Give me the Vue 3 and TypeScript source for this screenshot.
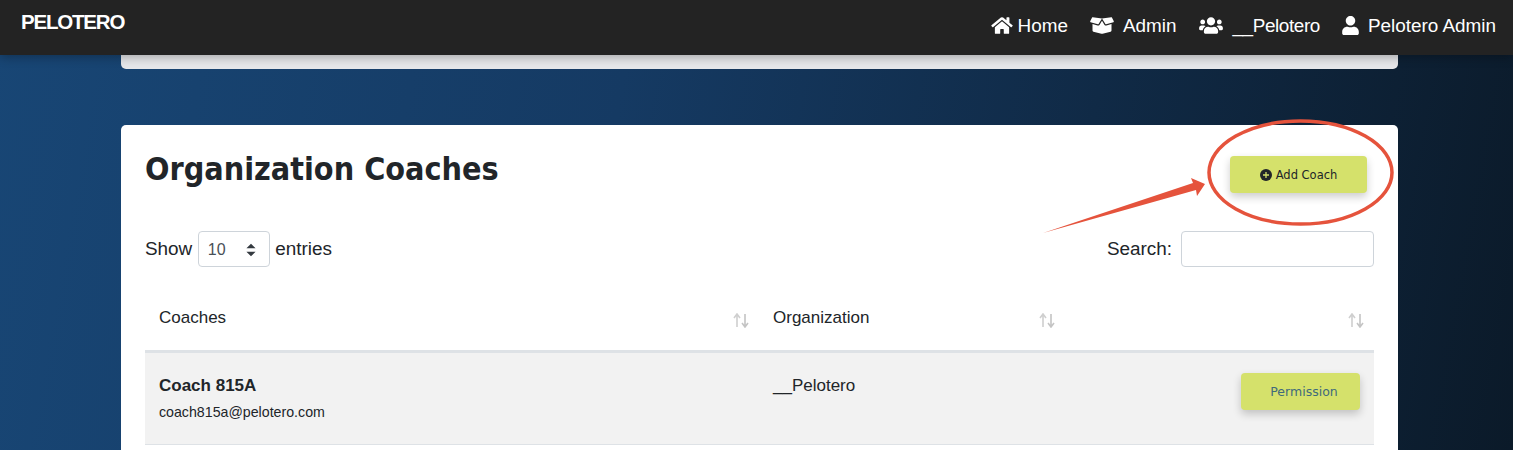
<script setup lang="ts">
type NavLink = { label: string; viewBox: string; d: string; width: number; gap: number }

const navLinks: NavLink[] = [
  {
    label: 'Home',
    viewBox: '0 0 576 512',
    width: 22,
    gap: 5,
    d: 'M280.37 148.26L96 300.11V464a16 16 0 0 0 16 16l112.06-.29a16 16 0 0 0 15.92-16V368a16 16 0 0 1 16-16h64a16 16 0 0 1 16 16v95.64a16 16 0 0 0 16 16.05L464 480a16 16 0 0 0 16-16V300L295.67 148.26a12.19 12.19 0 0 0-15.3 0zM571.6 251.47L488 182.56V44.05a12 12 0 0 0-12-12h-56a12 12 0 0 0-12 12v72.61L318.47 43a48 48 0 0 0-61 0L4.34 251.47a12 12 0 0 0-1.6 16.9l25.5 31A12 12 0 0 0 45.15 301l235.22-193.74a12.19 12.19 0 0 1 15.3 0L530.9 301a12 12 0 0 0 16.9-1.6l25.5-31a12 12 0 0 0-1.7-16.93z',
  },
  {
    label: 'Admin',
    viewBox: '0 0 640 512',
    width: 24,
    gap: 9,
    d: 'M425.7 256c-16.9 0-32.8-9-41.4-23.4L320 126l-64.2 106.6c-8.7 14.5-24.6 23.5-41.5 23.5-4.5 0-9-.6-13.3-1.9L64 215v178c0 14.7 10 27.5 24.2 31l216.2 54.1c10.2 2.5 20.9 2.5 31 0L551.8 424c14.2-3.6 24.2-16.4 24.2-31V215l-137 39.1c-4.3 1.3-8.8 1.9-13.3 1.9zm212.6-112.2L586.8 41c-3.1-6.2-9.8-9.8-16.7-8.9L320 64l91.7 152.1c3.8 6.3 11.4 9.3 18.5 7.3l197.9-56.5c9.9-2.9 14.7-13.9 10.2-23.1zM53.2 41L1.7 143.8c-4.6 9.2.3 20.2 10.1 23l197.9 56.5c7.1 2 14.7-1 18.5-7.3L320 64 69.8 32.1c-6.9-.8-13.5 2.7-16.6 8.9z',
  },
  {
    label: '__Pelotero',
    viewBox: '0 0 640 512',
    width: 24,
    gap: 10,
    d: 'M96 224c35.3 0 64-28.7 64-64s-28.7-64-64-64-64 28.7-64 64 28.7 64 64 64zm448 0c35.3 0 64-28.7 64-64s-28.7-64-64-64-64 28.7-64 64 28.7 64 64 64zm32 32h-64c-17.6 0-33.5 7.1-45.1 18.6 40.3 22.1 68.9 62 75.1 109.4h66c17.7 0 32-14.3 32-32v-32c0-35.3-28.7-64-64-64zm-256 0c61.9 0 112-50.1 112-112S381.9 32 320 32 208 82.1 208 144s50.1 112 112 112zm76.8 32h-8.3c-20.8 10-43.9 16-68.5 16s-47.6-6-68.5-16h-8.3C179.6 288 128 339.6 128 403.2V432c0 26.5 21.5 48 48 48h288c26.5 0 48-21.5 48-48v-28.8c0-63.6-51.6-115.2-115.2-115.2zm-223.7-13.4C161.5 263.1 145.6 256 128 256H64c-35.3 0-64 28.7-64 64v32c0 17.7 14.3 32 32 32h65.9c6.3-47.4 34.9-87.3 75.2-109.4z',
  },
  {
    label: 'Pelotero Admin',
    viewBox: '0 0 448 512',
    width: 17,
    gap: 9,
    d: 'M224 256c70.7 0 128-57.3 128-128S294.7 0 224 0 96 57.3 96 128s57.3 128 128 128zm89.6 32h-16.7c-22.2 10.2-46.9 16-72.9 16s-50.6-5.8-72.9-16h-16.7C60.2 288 0 348.2 0 422.4V464c0 26.5 21.5 48 48 48h352c26.5 0 48-21.5 48-48v-41.6c0-74.2-60.2-134.4-134.4-134.4z',
  },
]

const columns = ['Coaches', 'Organization', '']
</script>

<template>
  <div class="page">
    <nav class="navbar">
      <span class="brand">PELOTERO</span>
      <ul class="nav-links">
        <li
          v-for="link in navLinks"
          :key="link.label"
          class="nav-link"
          :class="{ tight: link.label.startsWith('__') }"
          :style="{ gap: link.gap + 'px' }"
        >
          <svg :viewBox="link.viewBox" :width="link.width" height="19" fill="#fff">
            <path :d="link.d" />
          </svg>
          {{ link.label }}
        </li>
      </ul>
    </nav>

    <main class="content">
      <div class="card card-top"></div>

      <section class="card card-coaches">
        <header class="card-head">
          <h1 class="title">Organization Coaches</h1>
          <button class="btn btn-add">
            <svg viewBox="0 0 12 12" width="12" height="12">
              <circle cx="6" cy="6" r="6" fill="#212529" />
              <path d="M6 3v6M3 6h6" stroke="#d5e16b" stroke-width="1.3" />
            </svg>
            Add Coach
          </button>
        </header>

        <div class="controls">
          <label class="length">
            Show
            <span class="select">
              10
              <svg viewBox="0 0 10 14" width="12" height="16">
                <path d="M5 1.5L9 5.5H1zM5 12.5L1 8.5H9z" fill="#343a40" />
              </svg>
            </span>
            entries
          </label>
          <label class="search">
            Search:
            <input class="search-input" type="text" />
          </label>
        </div>

        <div class="table">
          <div class="row row-head">
            <div v-for="col in columns" :key="col" class="cell th">
              <span>{{ col }}</span>
              <svg class="sort" viewBox="0 0 16 15" width="16" height="15">
                <path d="M4 14V2M1 5l3-4 3 4" fill="none" stroke="#cfcfcf" stroke-width="1.6" />
                <path d="M12 1v12M9 10l3 4 3-4" fill="none" stroke="#c4c4c4" stroke-width="1.6" />
              </svg>
            </div>
          </div>
          <div class="row row-body">
            <div class="cell">
              <div class="coach-name">Coach 815A</div>
              <div class="coach-email">coach815a@pelotero.com</div>
            </div>
            <div class="cell cell-org">__Pelotero</div>
            <div class="cell cell-action">
              <button class="btn btn-permission">Permission</button>
            </div>
          </div>
        </div>
      </section>
    </main>

    <!-- red marker annotation drawn over the screenshot -->
    <svg class="markup" viewBox="0 0 1513 450" width="1513" height="450">
      <ellipse cx="1300.5" cy="172.5" rx="91.5" ry="51.5" fill="none" stroke="#e5533c" stroke-width="3.5" />
      <polygon points="1043,233 1193,183 1191,178 1205,184 1197,196 1196,190" fill="#e5533c" />
    </svg>
  </div>
</template>

<style scoped>
.page {
  position: relative;
  height: 450px;
  overflow: hidden;
  background: linear-gradient(100deg, #184675 0%, #153a63 40%, #0b1a29 100%);
  font-family: "Liberation Sans", Arial, sans-serif;
  font-size: 17px;
  color: #212529;
}

.navbar {
  position: relative;
  z-index: 2;
  display: flex;
  align-items: center;
  justify-content: space-between;
  height: 55px;
  padding: 0 17px 0 21px;
  box-sizing: border-box;
  background: #232323;
  box-shadow: 0 2px 10px rgba(0, 0, 0, 0.3);
}
.brand {
  margin-top: -12px;
  font-size: 20.5px;
  font-weight: 700;
  letter-spacing: -1.2px;
  color: #fff;
}
.nav-links {
  display: flex;
  gap: 22px;
  margin: -4px 0 0;
  padding: 0;
  list-style: none;
}
.nav-link {
  display: flex;
  align-items: center;
  font-size: 18.9px;
  color: #fff;
}
.nav-link.tight {
  letter-spacing: -0.4px;
}

.content {
  padding: 0 115px 0 121px;
}
.card {
  background: #fff;
  border-radius: 5px;
}
.card-top {
  height: 14px;
  border-radius: 0 0 5px 5px;
  background: #e6e7ea;
}
.card-coaches {
  margin-top: 56px;
  padding: 24px;
}

.card-head {
  display: flex;
  align-items: flex-start;
  justify-content: space-between;
  height: 82px;
  padding-right: 7px;
}
.title {
  margin: 0;
  font-family: "DejaVu Sans Condensed", "DejaVu Sans", sans-serif;
  font-stretch: condensed;
  font-size: 32px;
  font-weight: 700;
  line-height: 40px;
  color: #212529;
}
.btn {
  display: flex;
  align-items: center;
  justify-content: center;
  border: 0;
  padding: 0;
  border-radius: 4px;
  background: #d5e16b;
  font-family: "DejaVu Sans", sans-serif;
  box-shadow: 0 4px 8px rgba(0, 0, 0, 0.2);
}
.btn-add {
  gap: 4px;
  width: 137px;
  height: 37px;
  margin-top: 7px;
  font-size: 11.5px;
  color: #212529;
}
.btn-permission {
  width: 119px;
  height: 37px;
  padding-left: 7px;
  font-size: 12.5px;
  color: #3f6a7c;
}

.controls {
  display: flex;
  align-items: center;
  justify-content: space-between;
  height: 36px;
  font-size: 18.9px;
}
.length,
.search {
  display: flex;
  align-items: center;
  gap: 6px;
}
.length {
  gap: 5.5px;
}
.search {
  gap: 9px;
}
.select {
  display: flex;
  align-items: center;
  justify-content: space-between;
  box-sizing: border-box;
  width: 72px;
  height: 36px;
  padding: 2px 12px 0 9px;
  border: 1px solid #ced4da;
  border-radius: 4px;
  font-size: 16px;
  color: #495057;
}
.search-input {
  box-sizing: border-box;
  width: 193px;
  height: 36px;
  border: 1px solid #ced4da;
  border-radius: 4px;
}

.table {
  margin-top: 17px;
}
.row {
  display: grid;
  grid-template-columns: 614px 306px 309px;
}
.row-head {
  height: 66px;
  border-bottom: 3px solid #dee2e6;
  box-sizing: content-box;
}
.row-body {
  height: 91px;
  border-bottom: 1px solid #dee2e6;
  background: #f2f2f2;
}
.cell {
  padding: 24px 14px 0;
}
.cell-org {
  padding-top: 23px;
}
.th {
  position: relative;
  display: flex;
  justify-content: space-between;
  padding-top: 24px;
  padding-right: 10px;
}
.sort {
  margin-top: 5px;
}
.coach-name {
  font-weight: 700;
  line-height: 18px;
}
.coach-email {
  margin-top: 8px;
  font-size: 14.2px;
  line-height: 18px;
}
.cell-action {
  display: flex;
  justify-content: flex-end;
  padding-top: 20px;
}

.markup {
  position: absolute;
  top: 0;
  left: 0;
  z-index: 3;
  pointer-events: none;
}
</style>
